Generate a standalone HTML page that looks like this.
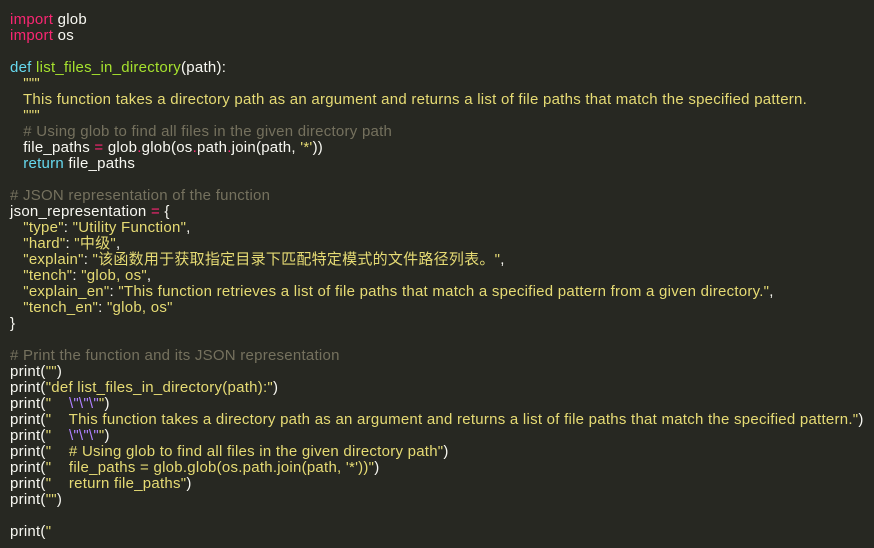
<!DOCTYPE html>
<html><head><meta charset="utf-8"><style>
html,body{margin:0;padding:0;background:#272822;width:874px;height:548px;overflow:hidden}
#c{position:absolute;left:10px;top:12px;font-family:"Liberation Sans","Noto Sans CJK SC",sans-serif;font-size:15px;color:#f8f8f2;letter-spacing:0.25px}
#c div{height:16px;line-height:16px;white-space:pre;overflow:visible}
.k{color:#f92672}.d{color:#66d9ef}.f{color:#a6e22e}.s{color:#e6db74}.c{color:#75715e}.e{color:#ae81ff}
</style></head><body><div id="c">
<div><span class="k">import</span> glob</div>
<div><span class="k">import</span> os</div>
<div></div>
<div><span class="d">def</span> <span class="f">list_files_in_directory</span>(path):</div>
<div>   <span class="s">"""</span></div>
<div>   <span class="s">This function takes a directory path as an argument and returns a list of file paths that match the specified pattern.</span></div>
<div>   <span class="s">"""</span></div>
<div>   <span class="c"># Using glob to find all files in the given directory path</span></div>
<div>   file_paths <span class="k">=</span> glob<span class="k">.</span>glob(os<span class="k">.</span>path<span class="k">.</span>join(path, <span class="s">'*'</span>))</div>
<div>   <span class="d">return</span> file_paths</div>
<div></div>
<div><span class="c"># JSON representation of the function</span></div>
<div>json_representation <span class="k">=</span> {</div>
<div>   <span class="s">"type"</span>: <span class="s">"Utility Function"</span>,</div>
<div>   <span class="s">"hard"</span>: <span class="s">"中级"</span>,</div>
<div>   <span class="s">"explain"</span>: <span class="s">"该函数用于获取指定目录下匹配特定模式的文件路径列表。"</span>,</div>
<div>   <span class="s">"tench"</span>: <span class="s">"glob, os"</span>,</div>
<div>   <span class="s">"explain_en"</span>: <span class="s">"This function retrieves a list of file paths that match a specified pattern from a given directory."</span>,</div>
<div>   <span class="s">"tench_en"</span>: <span class="s">"glob, os"</span></div>
<div>}</div>
<div></div>
<div><span class="c"># Print the function and its JSON representation</span></div>
<div>print(<span class="s">""</span>)</div>
<div>print(<span class="s">"def list_files_in_directory(path):"</span>)</div>
<div>print(<span class="s">"    <span class="e">\"\"\"</span>"</span>)</div>
<div>print(<span class="s">"    This function takes a directory path as an argument and returns a list of file paths that match the specified pattern."</span>)</div>
<div>print(<span class="s">"    <span class="e">\"\"\"</span>"</span>)</div>
<div>print(<span class="s">"    # Using glob to find all files in the given directory path"</span>)</div>
<div>print(<span class="s">"    file_paths = glob.glob(os.path.join(path, '*'))"</span>)</div>
<div>print(<span class="s">"    return file_paths"</span>)</div>
<div>print(<span class="s">""</span>)</div>
<div></div>
<div>print(<span class="s">"</span></div>
</div></body></html>
